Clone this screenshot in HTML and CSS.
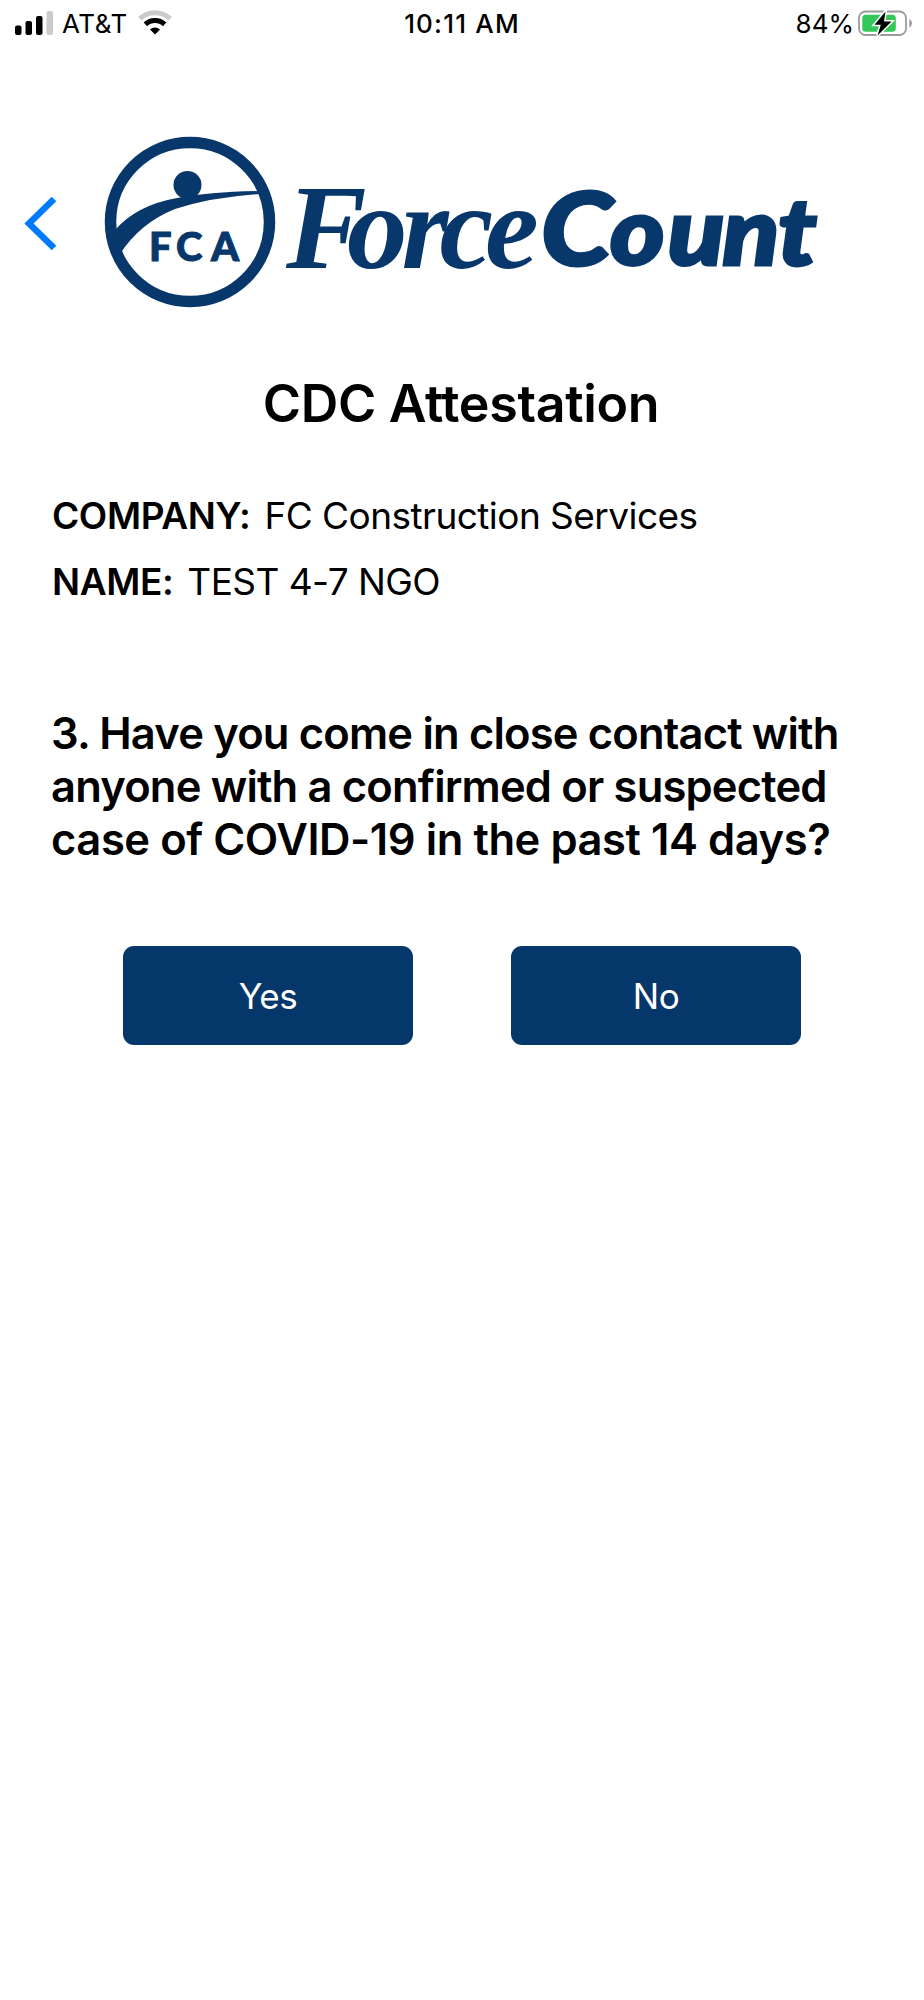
FILE: index.html
```html
<!DOCTYPE html>
<html lang="en">
<head>
  <meta charset="UTF-8" />
  <title>ForceCount</title>
  <link rel="stylesheet" href="styles.css">
</head>
<body>
  <div class="status-bar">
    <div class="status-left">
      <svg class="signal" width="39" height="24" viewBox="0 0 39 24">
        <rect x="0" y="14.5" width="6.5" height="9.5" rx="2"/>
        <rect x="10.5" y="10" width="6.5" height="14" rx="2"/>
        <rect x="21" y="5" width="6.5" height="19" rx="2"/>
        <rect x="31.5" y="0" width="6.5" height="24" rx="2" fill="#cbcbcb"/>
      </svg>
      <span class="carrier">AT&amp;T</span>
      <svg class="wifi" width="34" height="25" viewBox="0 0 34 25">
        <path d="M1.8 8.8A22 22 0 0 1 32.2 8.8" fill="none" stroke="#cbcbcb" stroke-width="5"/>
        <path d="M7.4 14.4A14 14 0 0 1 26.6 14.4" fill="none" stroke="#000" stroke-width="5"/>
        <path d="M12 19.5A7.4 7.4 0 0 1 22 19.5L17 24.5Z"/>
      </svg>
    </div>
    <div class="status-time">10:11 AM</div>
    <div class="status-right">
      <span class="percent">84%</span>
      <svg class="battery" width="55" height="27" viewBox="0 0 55 27">
        <rect x="1" y="1.5" width="47" height="23.5" rx="6.5" fill="none" stroke="#9b9b9b" stroke-width="1.8"/>
        <path d="M51.3 9Q54 10.5 54 13.2Q54 16 51.3 17.5Z" fill="#9b9b9b"/>
        <rect x="4.3" y="4.8" width="33.5" height="17" rx="3.5" fill="#34c759"/>
        <path d="M27.5 1.5L16.5 14.8H22.8L19.5 25.5L33.5 11.5H26Z" stroke="#fff" stroke-width="3" paint-order="stroke"/>
      </svg>
    </div>
  </div>

  <header class="header">
    <svg class="back" width="34" height="56" viewBox="0 0 34 56">
      <path d="M30 3L5 27.5L30 52" fill="none" stroke="#007aff" stroke-width="6.5"/>
    </svg>
    <svg class="logo" width="726" height="180" viewBox="100 132 726 180">
      <circle cx="190" cy="222" r="79.5" fill="none" stroke="#08386b" stroke-width="11.5"/>
      <circle cx="187.5" cy="185" r="14" fill="#08386b"/>
      <path d="M115 230Q137 205 177 198Q210 192 260 191V194Q212 197 175 209Q140 223 120 254Z" fill="#08386b"/>
      <text class="logo-fca" x="149 176 211" y="260.5">FCA</text>
      <text class="logo-force" x="286 347 401.5 439.6 485" y="267.5">Force</text>
      <g transform="translate(540 0) scale(1.12 1)">
        <text class="logo-count" x="1 62.5 114 163 212.5" y="265.5">C<tspan class="logo-ount">ount</tspan></text>
      </g>
    </svg>
  </header>

  <main class="content">
    <h1 class="title">CDC Attestation</h1>
    <div class="info"><b>COMPANY:</b><span>FC Construction Services</span></div>
    <div class="info"><b>NAME:</b><span>TEST 4-7 NGO</span></div>
    <p class="question">3. Have you come in close contact with<br>anyone with a confirmed or suspected<br><span class="last-line">case of COVID-19 in the past 14 days?</span></p>
    <div class="answers">
      <button class="answer">Yes</button>
      <button class="answer">No</button>
    </div>
  </main>
</body>
</html>
```

FILE: styles.css
```css
body {
  margin: 0;
  min-height: 2000px;
  background: #fff;
  color: #000;
  font-family: Inter, "Liberation Sans", sans-serif;
}
svg {
  display: block;
  flex: none;
}
.status-bar {
  display: grid;
  grid-template-columns: 1fr auto 1fr;
  height: 47px;
  padding: 0 11px 0 15px;
  font-size: 26px;
  line-height: 47px;
}
.status-left, .status-right {
  display: flex;
  align-items: center;
}
.status-right {
  justify-content: flex-end;
}
.signal {
  margin-top: -2px;
}
.carrier {
  margin-left: 8px;
  letter-spacing: 0.5px;
}
.wifi {
  margin: -3px 0 0 10px;
}
.status-time {
  margin-left: -4px;
  font-weight: 500;
  letter-spacing: 1.2px;
}
.percent {
  margin-right: 4px;
}
.battery {
  margin-top: -1px;
}
.header {
  display: flex;
  align-items: center;
  height: 180px;
  margin-top: 85px;
  padding-left: 24px;
}
.back {
  margin-top: 3px;
}
.logo {
  margin-left: 42px;
}
.logo text {
  fill: #08386b;
}
.logo-fca {
  font: 900 40px Lato, sans-serif;
  stroke: #08386b;
  stroke-width: 1;
}
.logo-force {
  font: italic bold 121px "Liberation Serif", serif;
}
.logo-count {
  font: italic 900 102px Lato, sans-serif;
  stroke: #08386b;
  stroke-width: 3;
}
.logo-ount {
  font-size: 93px;
}
.content {
  padding: 0 53px 0 51px;
}
.title {
  margin: 61px 0 51px;
  font-size: 52px;
  font-weight: 600;
  line-height: 62px;
  letter-spacing: -0.35px;
  text-align: center;
}
.info {
  display: flex;
  gap: 14px;
  height: 66px;
  padding-left: 1px;
  font-size: 37px;
  line-height: 60px;
  letter-spacing: -0.55px;
}
.info b {
  font-weight: 600;
  letter-spacing: -0.4px;
}
.question {
  margin: 89px 0 0;
  font-size: 43.5px;
  font-weight: 600;
  line-height: 53px;
  letter-spacing: -0.82px;
  white-space: nowrap;
}
.last-line {
  letter-spacing: -0.43px;
}
.answers {
  display: flex;
  gap: 98px;
  margin: 80px 0 0 72px;
}
.answer {
  width: 290px;
  height: 99px;
  padding: 0;
  border: none;
  border-radius: 11px;
  background: #06376b;
  color: #fff;
  font: 35px Inter, "Liberation Sans", sans-serif;
  letter-spacing: -0.5px;
}
```
